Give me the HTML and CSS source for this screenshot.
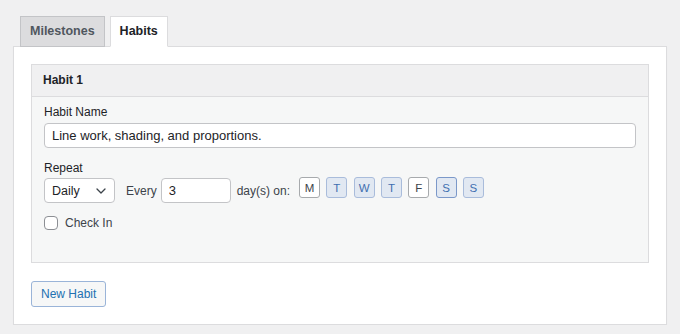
FILE: index.html
```html
<!DOCTYPE html>
<html lang="en">

<head>
    <meta charset="UTF-8">
    <meta name="viewport" content="width=device-width, initial-scale=1.0">
    <title>Habits</title>
    <link rel="stylesheet" href="styles.css">
</head>

<body>
    <div class="tabs">
        <a class="tab">Milestones</a>
        <a class="tab active">Habits</a>
    </div>

    <div class="panel">
        <div class="habit">
            <div class="habit-head">Habit 1</div>
            <div class="habit-body">
                <label class="lbl">Habit Name</label>
                <input type="text" class="input name" value="Line work, shading, and proportions." />

                <label class="lbl lbl-gap">Repeat</label>
                <div class="repeat">
                    <div class="select">
                        <span>Daily</span>
                        <svg width="10" height="6" viewBox="0 0 10 6"><path d="M1 1l4 4 4-4" fill="none" stroke="#3c434a" stroke-width="1.3" stroke-linecap="round" stroke-linejoin="round"/></svg>
                    </div>
                    <span class="txt">Every</span>
                    <input type="text" class="input num" value="3" />
                    <span class="txt">day(s) on:</span>
                    <div class="days">
                        <button class="day">M</button>
                        <button class="day on">T</button>
                        <button class="day on">W</button>
                        <button class="day on">T</button>
                        <button class="day">F</button>
                        <button class="day on focus">S</button>
                        <button class="day on">S</button>
                    </div>
                </div>

                <label class="check">
                    <input type="checkbox" />
                    <span>Check In</span>
                </label>
            </div>
        </div>

        <button class="btn">New Habit</button>
    </div>
</body>

</html>
```

FILE: styles.css
```css
body {
    margin: 0;
    padding: 16px 13px 0;
    background-color: #f0f0f1;
    font-family: "Liberation Sans", Arial, sans-serif;
    font-size: 12px;
    color: #1d2327;
}

.tabs {
    display: flex;
    gap: 5px;
    padding-left: 7px;
    margin-bottom: -1px;
}

.tab {
    position: relative;
    box-sizing: border-box;
    height: 31px;
    line-height: 29px;
    padding: 0 9px;
    font-size: 12.5px;
    font-weight: bold;
    color: #50575e;
    background-color: #dcdcde;
    border: 1px solid #c3c4c7;
}

.tab.active {
    color: #1d2327;
    background-color: #fff;
    border-color: #dcdcde;
    border-bottom-color: #fff;
}

.panel {
    background-color: #fff;
    border: 1px solid #dcdcde;
    box-shadow: 0 1px 1px rgba(0, 0, 0, .04);
    padding: 17px 17px 17px;
}

.habit {
    border: 1px solid #dcdcde;
}

.habit-head {
    height: 31px;
    line-height: 31px;
    padding-left: 11px;
    font-size: 12px;
    font-weight: bold;
    background-color: #f0f0f1;
    border-bottom: 1px solid #dcdcde;
}

.habit-body {
    display: flex;
    flex-direction: column;
    align-items: flex-start;
    padding: 6px 12px 31px;
    background-color: #f6f7f7;
}

.lbl {
    line-height: 18px;
    margin-bottom: 2px;
}

.lbl-gap {
    margin-top: 11px;
    margin-bottom: 1px;
}

.input {
    box-sizing: border-box;
    height: 25px;
    padding: 0 7px;
    font-family: inherit;
    font-size: 13px;
    color: #1d2327;
    background-color: #fff;
    border: 1px solid #c3c4c7;
    border-radius: 4px;
}

.name {
    width: 100%;
}

.repeat {
    display: flex;
    align-items: center;
    height: 25px;
}

.select {
    box-sizing: border-box;
    display: flex;
    align-items: center;
    justify-content: space-between;
    width: 71px;
    height: 25px;
    padding: 0 8px 0 7px;
    font-size: 12.5px;
    background-color: #fff;
    border: 1px solid #c3c4c7;
    border-radius: 4px;
}

.txt {
    margin: 0 4px 0 11px;
    color: #3c434a;
}

.num {
    width: 70px;
}

.num + .txt {
    margin: 0 9px 0 6px;
}

.days {
    display: flex;
    gap: 6.3px;
    align-self: flex-start;
    margin-top: -1px;
}

.day {
    box-sizing: border-box;
    width: 21px;
    height: 21px;
    padding: 0;
    font-family: inherit;
    font-size: 11.5px;
    color: #3c434a;
    background-color: #fff;
    border: 1px solid #a7aaad;
    border-radius: 3px;
}

.day.on {
    color: #3f6fb0;
    background-color: #e1e8f2;
    border-color: #a9bcdb;
}

.day.focus {
    border-color: #7b98c9;
}

.check {
    display: flex;
    align-items: center;
    gap: 7px;
    height: 16px;
    margin-top: 12px;
    color: #3c434a;
}

.check input {
    appearance: none;
    box-sizing: border-box;
    width: 14px;
    height: 14px;
    margin: 0;
    background-color: #fff;
    border: 1px solid #8c8f94;
    border-radius: 4px;
}

.btn {
    box-sizing: border-box;
    height: 26px;
    margin-top: 18px;
    padding: 0 9px;
    font-family: inherit;
    font-size: 12px;
    color: #2271b1;
    background-color: #f6f7f7;
    border: 1px solid #9ab4d8;
    border-radius: 3px;
}
```
